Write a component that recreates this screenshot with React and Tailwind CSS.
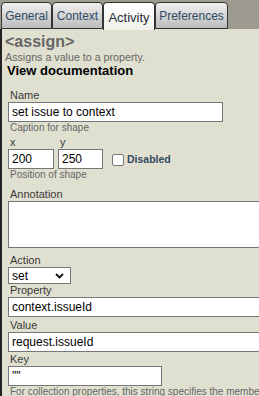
import React from 'react'

const tabs = [
  { label: 'General', w: 'w-[51px]' },
  { label: 'Context', w: 'w-[51px]' },
  { label: 'Activity', w: 'w-[52px]', active: true },
  { label: 'Preferences', w: 'w-[73px]' }
]

const Label = ({ children, className = '' }) => (
  <div className={`text-[11px] leading-[13px] text-[#3a3a3a] pl-[2px] ${className}`}>{children}</div>
)

const Help = ({ children, className = '' }) => (
  <div className={`text-[10px] leading-[12px] text-[#666] pl-[2px] whitespace-nowrap ${className}`}>{children}</div>
)

const TextBox = ({ value, className = '' }) => (
  <div className={`h-[20px] bg-white border border-[#767676] flex items-center px-[3px] text-[12px] text-black whitespace-nowrap overflow-hidden ${className}`}>
    {value}
  </div>
)

export default function App() {
  return (
    <div className="w-[259px] h-[396px] overflow-hidden bg-[#9d9b8f] font-['Liberation_Sans',Arial,sans-serif] flex flex-col">
      {/* Tabs */}
      <div className="flex items-end h-[29px] pl-[1px] shrink-0">
        {tabs.map((t) =>
          t.active ? (
            <div
              key={t.label}
              className={`${t.w} h-[28px] -mb-px relative z-10 rounded-t-[4px] border border-b-0 border-[#333] bg-gradient-to-b from-white to-[#f1f1ea] text-[13px] text-[#1f2d3a] flex items-center justify-center pt-[2px]`}
            >
              {t.label}
            </div>
          ) : (
            <div
              key={t.label}
              className={`${t.w} h-[27px] rounded-t-[4px] border border-[#333] bg-gradient-to-b from-[#f0f0f0] to-[#bcbcbc] text-[12px] text-[#2f4a63] flex items-center justify-center`}
            >
              {t.label}
            </div>
          )
        )}
      </div>

      {/* Panel */}
      <div className="flex-1 bg-[#e0e0d0] border-l-2 border-[#222] pt-[4px] overflow-hidden">
        <div className="pl-[3px]">
          <div className="text-[16px] leading-[18px] font-bold text-[#666]">&lt;assign&gt;</div>
          <div className="text-[10.7px] leading-[13px] text-[#666]">Assigns a value to a property.</div>
          <div className="text-[13px] leading-[14px] font-bold text-black pl-[2px]">View documentation</div>
        </div>

        <div className="pl-[6px]">
          <Label className="mt-[11px]">Name</Label>
          <TextBox value="set issue to context" className="w-[215px]" />
          <Help>Caption for shape</Help>

          <div className="flex items-start mt-[2px]">
            <div>
              <Label>x</Label>
              <TextBox value="200" className="w-[46px]" />
            </div>
            <div className="ml-[4px]">
              <Label>y</Label>
              <TextBox value="250" className="w-[45px]" />
            </div>
            <div className="flex items-center ml-[9px] mt-[16px]">
              <div className="w-[12px] h-[12px] bg-white border border-[#767676] rounded-[2px]" />
              <span className="ml-[3px] text-[10.5px] font-bold text-[#34495e]">Disabled</span>
            </div>
          </div>
          <Help>Position of shape</Help>

          <Label className="mt-[7px]">Annotation</Label>
          <div className="h-[47px] w-[270px] bg-white border border-[#767676]" />

          <Label className="mt-[5px] leading-[14px]">Action</Label>
          <div className="w-[63px] h-[17px] bg-white border border-[#767676] flex items-center justify-between pl-[3px] pr-[6px] text-[12px] text-black">
            <span>set</span>
            <svg width="9" height="6" viewBox="0 0 9 6" fill="none">
              <path d="M1 1l3.5 3.5L8 1" stroke="#111" strokeWidth="1.8" />
            </svg>
          </div>

          <Label>Property</Label>
          <TextBox value="context.issueId" className="w-[270px]" />

          <Label className="mt-[2px]">Value</Label>
          <TextBox value="request.issueId" className="w-[270px]" />

          <Label className="mt-[1px]">Key</Label>
          <TextBox value={'""'} className="w-[154px] h-[19px] text-[10px]" />
          <Help>For collection properties, this string specifies the member</Help>
        </div>
      </div>
    </div>
  )
}
